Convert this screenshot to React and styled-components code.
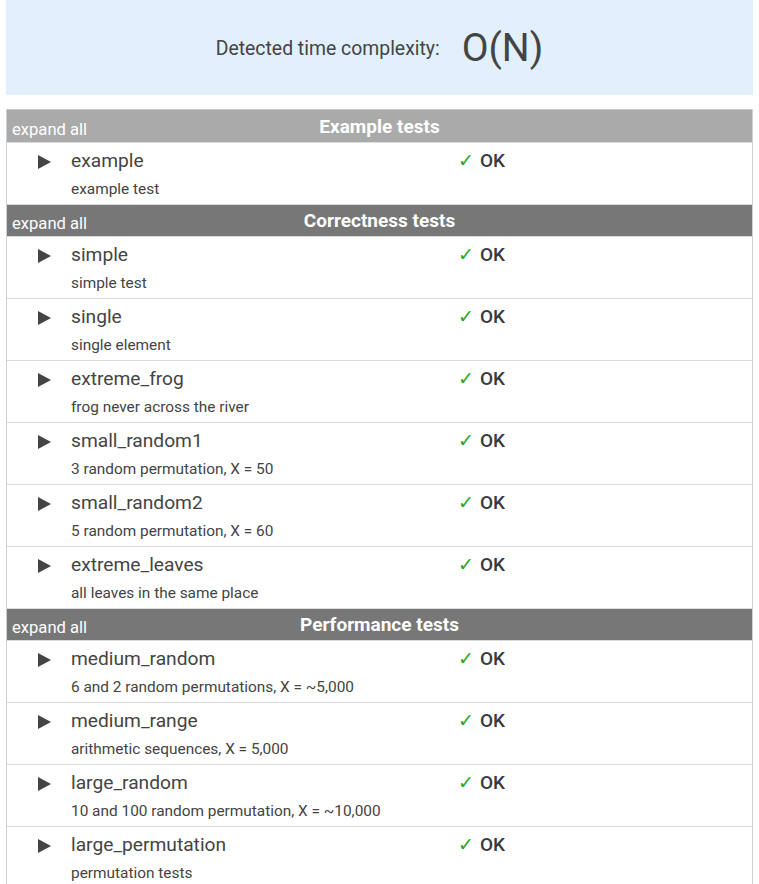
import React from "react";
import styled, { createGlobalStyle } from "styled-components";

const Global = createGlobalStyle`
  body {
    margin: 0;
    font-family: Roboto, "Liberation Sans", Arial, sans-serif;
    background: #fff;
    color: #444;
  }
`;

const Page = styled.div`
  padding: 0 6px;
`;

const Complexity = styled.div`
  height: 95px;
  background: #e1f0fc;
  display: flex;
  align-items: center;
  justify-content: center;
  gap: 22px;
`;

const ComplexityLabel = styled.span`
  font-size: 19.4px;
  color: #444;
  padding-top: 2px;
`;

const ComplexityValue = styled.span`
  font-size: 39px;
  color: #444;
`;

const Table = styled.div`
  margin-top: 14px;
  border: 1px solid #d0d0d0;
  border-top: 1px solid #c8c8c8;
`;

const GroupHeader = styled.div`
  display: grid;
  grid-template-columns: 1fr auto 1fr;
  align-items: center;
  height: ${({ light }) => (light ? "32px" : "31px")};
  background: ${({ light }) => (light ? "#aaaaaa" : "#777777")};
  border-bottom: 1px solid #dcdcdc;
  color: #fff;
`;

const ExpandAll = styled.span`
  font-size: 16.6px;
  padding-left: 5px;
  padding-top: 6px;
`;

const GroupTitle = styled.span`
  font-size: 19px;
  font-weight: 700;
`;

const Row = styled.div`
  display: grid;
  grid-template-columns: 64px 387px 1fr;
  height: 61px;
  border-bottom: 1px solid #dcdcdc;
  &:last-child {
    border-bottom: none;
  }
`;

const Arrow = styled.div`
  margin: 12px 0 0 31px;
  width: 0;
  height: 0;
  border-top: 7px solid transparent;
  border-bottom: 7px solid transparent;
  border-left: 13px solid #444;
`;

const NameCell = styled.div`
  padding-top: 6px;
`;

const Name = styled.div`
  font-size: 19.2px;
  line-height: 24px;
  color: #444;
`;

const Description = styled.div`
  font-size: 15.4px;
  line-height: 20px;
  margin-top: 6px;
  color: #444;
`;

const Result = styled.div`
  padding-top: 6px;
  font-size: 19px;
  line-height: 24px;
  font-weight: 500;
  color: #3a3a3a;
`;

const Check = styled.span`
  color: #22aa22;
  font-weight: 400;
  margin-right: 6px;
`;

const groups = [
  {
    title: "Example tests",
    light: true,
    tests: [["example", "example test"]],
  },
  {
    title: "Correctness tests",
    tests: [
      ["simple", "simple test"],
      ["single", "single element"],
      ["extreme_frog", "frog never across the river"],
      ["small_random1", "3 random permutation, X = 50"],
      ["small_random2", "5 random permutation, X = 60"],
      ["extreme_leaves", "all leaves in the same place"],
    ],
  },
  {
    title: "Performance tests",
    tests: [
      ["medium_random", "6 and 2 random permutations, X = ~5,000"],
      ["medium_range", "arithmetic sequences, X = 5,000"],
      ["large_random", "10 and 100 random permutation, X = ~10,000"],
      ["large_permutation", "permutation tests"],
    ],
  },
];

export default function App() {
  return (
    <Page>
      <Global />
      <Complexity>
        <ComplexityLabel>Detected time complexity:</ComplexityLabel>
        <ComplexityValue>O(N)</ComplexityValue>
      </Complexity>
      <Table>
        {groups.map((g) => (
          <React.Fragment key={g.title}>
            <GroupHeader light={g.light}>
              <ExpandAll>expand all</ExpandAll>
              <GroupTitle>{g.title}</GroupTitle>
              <span />
            </GroupHeader>
            {g.tests.map(([name, desc]) => (
              <Row key={name}>
                <Arrow />
                <NameCell>
                  <Name>{name}</Name>
                  <Description>{desc}</Description>
                </NameCell>
                <Result>
                  <Check>✓</Check>OK
                </Result>
              </Row>
            ))}
          </React.Fragment>
        ))}
      </Table>
    </Page>
  );
}
